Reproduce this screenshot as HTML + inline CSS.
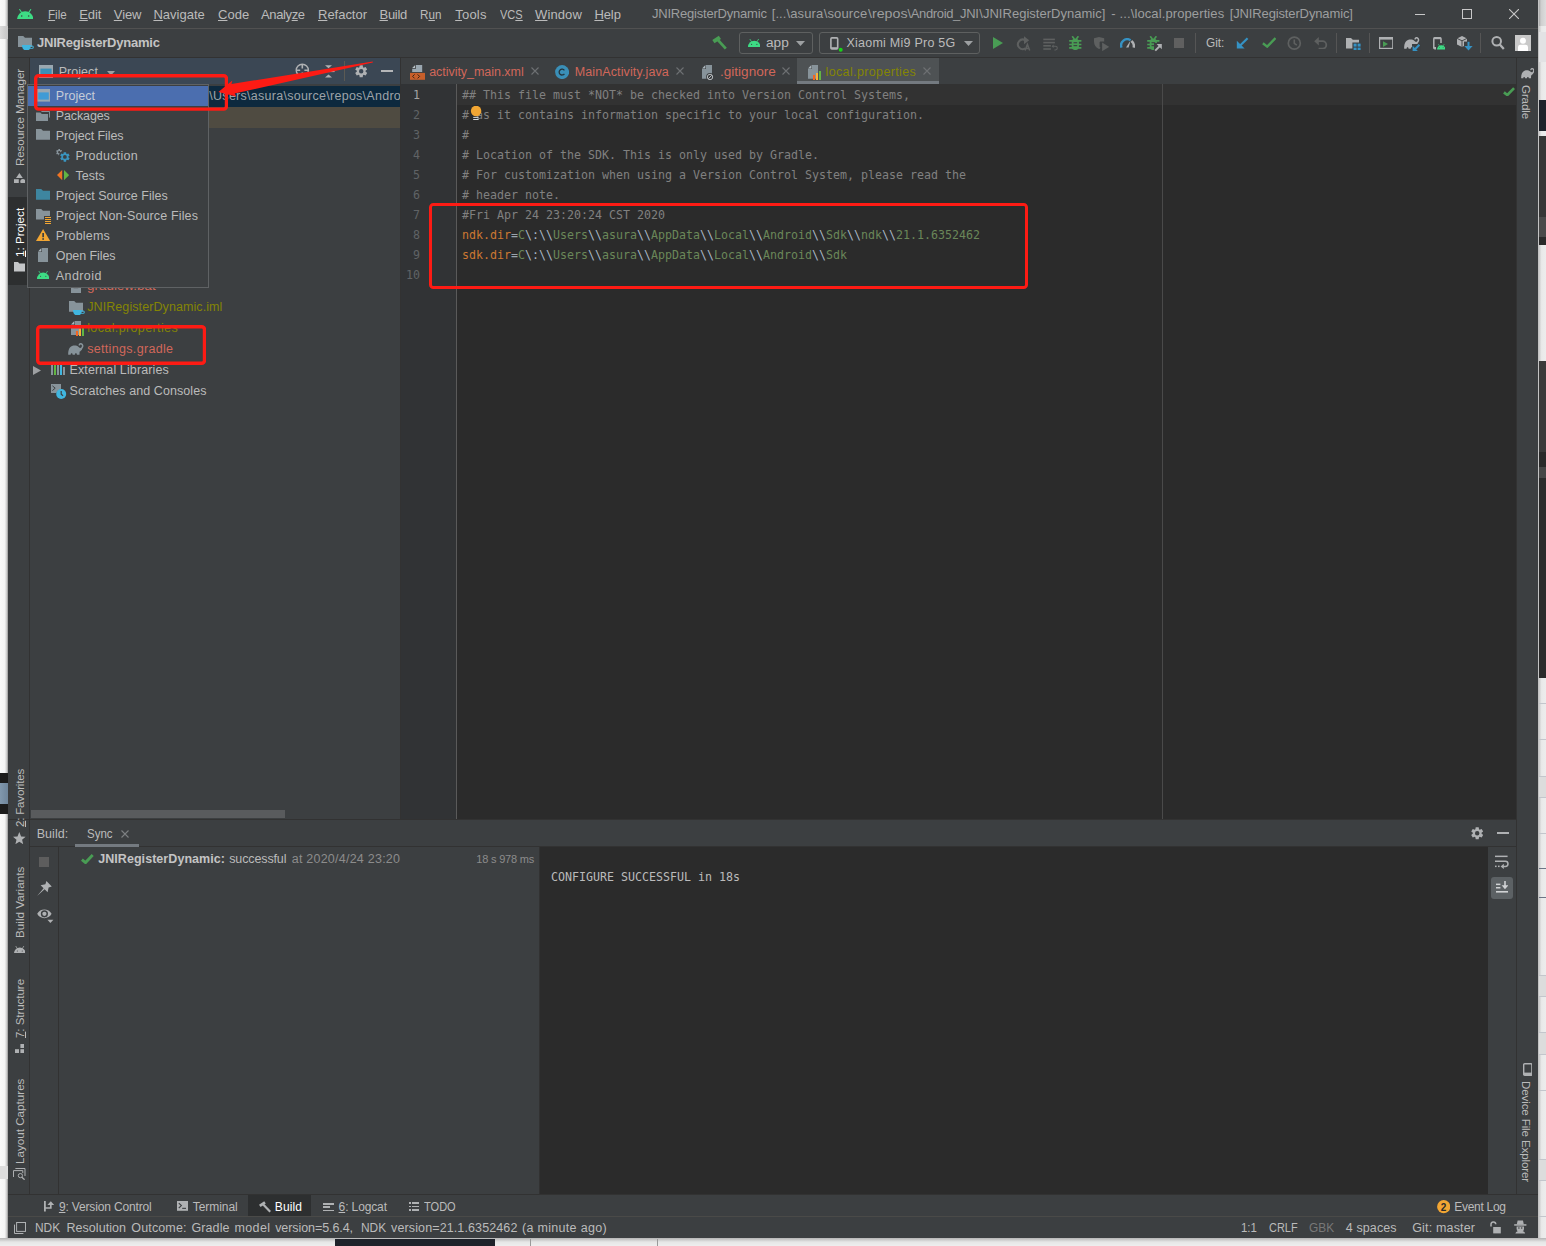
<!DOCTYPE html><html><head><meta charset="utf-8"><title>JNIRegisterDynamic</title><style>
html,body{margin:0;padding:0;}body{width:1546px;height:1246px;position:relative;overflow:hidden;background:#f0f0f0;font-family:'Liberation Sans', sans-serif;}
#w div,#w svg,#w span.t{position:absolute;}
span.t{white-space:pre;line-height:1;display:block;}
span.m{font-family:'DejaVu Sans Mono', 'Liberation Mono', monospace;}
u{text-decoration:underline;text-underline-offset:0.5px;text-decoration-thickness:1px;}
</style></head><body><div id="w">
<div style="left:0px;top:0px;width:1546px;height:1246px;background:#efefef;"></div>
<div style="left:0px;top:0px;width:8px;height:1246px;background:linear-gradient(90deg,#fafafa 0%,#f5f5f5 60%,#c4c4c4 88%,#8c8c8c 100%);"></div>
<div style="left:0px;top:26px;width:8px;height:13px;background:linear-gradient(90deg,#dcdcdc,#c4c4c4);"></div>
<div style="left:0px;top:773px;width:8px;height:41px;background:#1c1c1c;"></div>
<div style="left:0px;top:783px;width:8px;height:21px;background:linear-gradient(90deg,#8198ad,#6f859a);"></div>
<div style="left:0px;top:1166px;width:8px;height:13px;background:#dddddd;"></div>
<div style="left:1538px;top:0px;width:8px;height:1246px;background:linear-gradient(90deg,#bdbdbd 0%,#e9e9e9 45%,#ededed 100%);"></div>
<div style="left:1539px;top:100px;width:7px;height:31px;background:#1e222a;"></div>
<div style="left:1539px;top:0px;width:7px;height:26px;background:linear-gradient(90deg,#a9a9a9 0%,#cfcfcf 30%,#dddddd 100%);"></div>
<div style="left:1539px;top:32px;width:7px;height:30px;background:#e2e2e4;"></div>
<div style="left:1539px;top:136px;width:7px;height:81px;background:#363636;"></div>
<div style="left:1539px;top:217px;width:7px;height:20px;background:#4a4a4a;"></div>
<div style="left:1539px;top:237px;width:7px;height:8px;background:#2a2a2a;"></div>
<div style="left:1539px;top:361px;width:7px;height:91px;background:#3a3a3a;"></div>
<div style="left:1539px;top:452px;width:7px;height:15px;background:#2a2a2a;"></div>
<div style="left:1539px;top:467px;width:7px;height:11px;background:#464646;"></div>
<div style="left:1539px;top:478px;width:7px;height:200px;background:#2b2b2b;"></div>
<div style="left:1539px;top:703px;width:7px;height:1px;background:#c3c6cc;"></div>
<div style="left:1539px;top:739px;width:7px;height:1px;background:#c3c6cc;"></div>
<div style="left:1539px;top:776px;width:7px;height:1px;background:#c3c6cc;"></div>
<div style="left:1539px;top:797px;width:7px;height:1px;background:#c3c6cc;"></div>
<div style="left:1539px;top:833px;width:7px;height:1px;background:#c3c6cc;"></div>
<div style="left:1539px;top:975px;width:7px;height:1px;background:#c3c6cc;"></div>
<div style="left:1539px;top:996px;width:7px;height:1px;background:#c3c6cc;"></div>
<div style="left:1539px;top:1032px;width:7px;height:1px;background:#c3c6cc;"></div>
<div style="left:1539px;top:1054px;width:7px;height:1px;background:#c3c6cc;"></div>
<div style="left:1539px;top:1090px;width:7px;height:1px;background:#c3c6cc;"></div>
<div style="left:1539px;top:1159px;width:7px;height:1px;background:#c3c6cc;"></div>
<div style="left:1539px;top:1180px;width:7px;height:1px;background:#c3c6cc;"></div>
<div style="left:1539px;top:1216px;width:7px;height:1px;background:#c3c6cc;"></div>
<div style="left:1539px;top:868px;width:7px;height:1px;background:#6d7586;"></div>
<div style="left:1539px;top:897px;width:7px;height:1px;background:#6d7586;"></div>
<div style="left:1539px;top:777px;width:7px;height:20px;background:#dcdcdc;"></div>
<div style="left:1539px;top:976px;width:7px;height:20px;background:#dcdcdc;"></div>
<div style="left:1539px;top:1033px;width:7px;height:21px;background:#dcdcdc;"></div>
<div style="left:1539px;top:1160px;width:7px;height:20px;background:#dcdcdc;"></div>
<div style="left:0px;top:1238px;width:1546px;height:8px;background:linear-gradient(180deg,#b5b5b5 0%,#e6e6e6 50%,#eeeeee 100%);"></div>
<div style="left:335px;top:1239px;width:160px;height:7px;background:#1e222a;"></div>
<div style="left:530px;top:1239px;width:1px;height:7px;background:#9a9a9a;"></div>
<div style="left:657px;top:1239px;width:1px;height:7px;background:#9a9a9a;"></div>
<div style="left:8px;top:0px;width:1530px;height:1238px;background:#3c3f41;"></div>
<div style="left:8px;top:28px;width:1530px;height:1px;background:#515151;"></div>
<div style="left:8px;top:57px;width:1530px;height:1px;background:#323232;"></div>
<div style="left:29px;top:58px;width:1px;height:1136px;background:#323232;"></div>
<div style="left:8px;top:197px;width:21px;height:88px;background:#2d2f30;"></div>
<div style="left:30px;top:58px;width:370px;height:26px;background:#3b4754;"></div>
<div style="left:30px;top:86px;width:370px;height:21px;background:#0d293e;"></div>
<div style="left:30px;top:107px;width:370px;height:21px;background:#4f4b41;"></div>
<div style="left:400px;top:58px;width:1px;height:762px;background:#323232;"></div>
<div style="left:31px;top:810px;width:254px;height:8px;background:#595b5d;"></div>
<div style="left:401px;top:58px;width:1115px;height:26px;background:#3c3f41;"></div>
<div style="left:797px;top:58px;width:142px;height:26px;background:#4e5254;"></div>
<div style="left:797px;top:81px;width:142px;height:3px;background:#747a80;"></div>
<div style="left:401px;top:84px;width:1115px;height:735px;background:#2b2b2b;"></div>
<div style="left:401px;top:84px;width:55px;height:735px;background:#313335;"></div>
<div style="left:456px;top:84px;width:1px;height:735px;background:#5a5a5a;"></div>
<div style="left:457px;top:84px;width:1059px;height:21px;background:#323232;"></div>
<div style="left:1162px;top:84px;width:1px;height:735px;background:#4a4a4a;"></div>
<div style="left:1516px;top:58px;width:1px;height:1136px;background:#323232;"></div>
<div style="left:8px;top:819px;width:1509px;height:1px;background:#323232;"></div>
<div style="left:30px;top:820px;width:1486px;height:26px;background:#3c3f41;"></div>
<div style="left:30px;top:846px;width:1486px;height:1px;background:#323232;"></div>
<div style="left:75px;top:844px;width:64px;height:3px;background:#747a80;"></div>
<div style="left:58px;top:847px;width:1px;height:347px;background:#323232;"></div>
<div style="left:540px;top:847px;width:948px;height:347px;background:#2b2b2b;"></div>
<div style="left:539px;top:847px;width:1px;height:347px;background:#323232;"></div>
<div style="left:1491px;top:877px;width:22px;height:22px;background:#5c6164;border-radius:3px;"></div>
<div style="left:8px;top:1194px;width:1530px;height:1px;background:#323232;"></div>
<div style="left:248px;top:1195px;width:63px;height:22px;background:#2d2f30;"></div>
<div style="left:8px;top:1216px;width:1530px;height:1px;background:#4a4a48;"></div>
<span class="t" id="t0" style="font-size:13px;color:#bbbbbb;transform-origin:0 0;transform:scaleX(0.8918);left:48.2px;top:8.00px;"><u>F</u>ile</span>
<span class="t" id="t1" style="font-size:13px;color:#bbbbbb;letter-spacing:-0.069px;left:79.2px;top:8.00px;"><u>E</u>dit</span>
<span class="t" id="t2" style="font-size:13px;color:#bbbbbb;letter-spacing:-0.084px;left:113.8px;top:8.00px;"><u>V</u>iew</span>
<span class="t" id="t3" style="font-size:13px;color:#bbbbbb;letter-spacing:0.013px;left:153.4px;top:8.00px;"><u>N</u>avigate</span>
<span class="t" id="t4" style="font-size:13px;color:#bbbbbb;letter-spacing:0.069px;left:218px;top:8.00px;"><u>C</u>ode</span>
<span class="t" id="t5" style="font-size:13px;color:#bbbbbb;letter-spacing:-0.378px;left:261px;top:8.00px;">Analy<u>z</u>e</span>
<span class="t" id="t6" style="font-size:13px;color:#bbbbbb;letter-spacing:-0.020px;left:318px;top:8.00px;"><u>R</u>efactor</span>
<span class="t" id="t7" style="font-size:13px;color:#bbbbbb;letter-spacing:-0.305px;left:379.5px;top:8.00px;"><u>B</u>uild</span>
<span class="t" id="t8" style="font-size:13px;color:#bbbbbb;transform-origin:0 0;transform:scaleX(0.8969);left:420.4px;top:8.00px;">R<u>u</u>n</span>
<span class="t" id="t9" style="font-size:13px;color:#bbbbbb;letter-spacing:0.235px;left:455.2px;top:8.00px;"><u>T</u>ools</span>
<span class="t" id="t10" style="font-size:13px;color:#bbbbbb;transform-origin:0 0;transform:scaleX(0.8491);left:500.3px;top:8.00px;">VC<u>S</u></span>
<span class="t" id="t11" style="font-size:13px;color:#bbbbbb;letter-spacing:0.090px;left:535.1px;top:8.00px;"><u>W</u>indow</span>
<span class="t" id="t12" style="font-size:13px;color:#bbbbbb;letter-spacing:-0.083px;left:594.4px;top:8.00px;"><u>H</u>elp</span>
<span class="t" id="t13" style="font-size:13px;color:#9c9e9f;letter-spacing:-0.211px;left:652px;top:7.30px;">JNIRegisterDynamic</span>
<span class="t" id="t14" style="font-size:13px;color:#9c9e9f;letter-spacing:0.102px;left:771.7px;top:7.30px;">[...\asura</span>
<span class="t" id="t15" style="font-size:13px;color:#9c9e9f;letter-spacing:0.143px;left:823.7px;top:7.30px;">\source</span>
<span class="t" id="t16" style="font-size:13px;color:#9c9e9f;transform-origin:0 0;transform:scaleX(1.0930);left:867.5px;top:7.30px;">\repos</span>
<span class="t" id="t17" style="font-size:13px;color:#9c9e9f;letter-spacing:-0.341px;left:907.4px;top:7.30px;">\Android_JNI</span>
<span class="t" id="t18" style="font-size:13px;color:#9c9e9f;letter-spacing:0.021px;left:979.3px;top:7.30px;">\JNIRegisterDynamic]</span>
<span class="t" id="t19" style="font-size:13px;color:#9c9e9f;left:1111.2px;top:7.30px;">-</span>
<span class="t" id="t20" style="font-size:13px;color:#9c9e9f;letter-spacing:0.110px;left:1119.5px;top:7.30px;">...\local.properties</span>
<span class="t" id="t21" style="font-size:13px;color:#9c9e9f;letter-spacing:-0.132px;left:1229.7px;top:7.30px;">[JNIRegisterDynamic]</span>
<div style="left:1415px;top:14px;width:10px;height:1px;background:#c8c8c8;"></div>
<div style="left:1462px;top:9px;width:10px;height:10px;background:transparent;border:1px solid #c8c8c8;box-sizing:border-box;"></div>
<svg style="left:1509px;top:9px;" width="10" height="10" viewBox="0 0 10 10"><path d="M0,0 L10,10 M10,0 L0,10" stroke="#c8c8c8" stroke-width="1.1" fill="none"/></svg>
<span class="t" id="t22" style="font-size:13px;color:#c4c4c4;font-weight:bold;letter-spacing:-0.203px;left:37px;top:35.80px;">JNIRegisterDynamic</span>
<span class="t" id="t23" style="font-size:12.5px;color:#bbbbbb;transform-origin:0 0;transform:scaleX(1.0930);left:766.3px;top:37.02px;">app</span>
<span class="t" id="t24" style="font-size:12.5px;color:#bbbbbb;letter-spacing:0.250px;left:846.4px;top:36.82px;">Xiaomi Mi9 Pro 5G</span>
<span class="t" id="t25" style="font-size:13px;color:#bbbbbb;transform-origin:0 0;transform:scaleX(0.9093);left:1205.8px;top:36.00px;">Git:</span>
<div style="left:739px;top:32px;width:74px;height:22px;background:transparent;border:1px solid #5e6060;border-radius:3px;box-sizing:border-box;"></div>
<div style="left:819px;top:32px;width:161px;height:22px;background:transparent;border:1px solid #5e6060;border-radius:3px;box-sizing:border-box;"></div>
<svg style="left:796px;top:41px;" width="9" height="5" viewBox="0 0 9 5"><path d="M0,0 H9 L4.5,5 Z" fill="#9da0a2"/></svg>
<svg style="left:963.5px;top:41px;" width="9" height="5" viewBox="0 0 9 5"><path d="M0,0 H9 L4.5,5 Z" fill="#9da0a2"/></svg>
<div style="left:1195px;top:33px;width:1px;height:20px;background:#555555;"></div>
<div style="left:1336px;top:33px;width:1px;height:20px;background:#555555;"></div>
<div style="left:1369px;top:33px;width:1px;height:20px;background:#555555;"></div>
<div style="left:1480px;top:33px;width:1px;height:20px;background:#555555;"></div>
<span class="t" id="t26" style="font-size:12.5px;color:#bbbbbb;letter-spacing:0.049px;left:58.7px;top:65.92px;">Project</span>
<svg style="left:107px;top:70.5px;" width="8" height="5" viewBox="0 0 8 5"><path d="M0,0 H8 L4,4.5 Z" fill="#9da0a2"/></svg>
<div style="left:344px;top:61px;width:1px;height:20px;background:#5b5a54;"></div>
<div style="left:381px;top:70px;width:12px;height:2px;background:#b4b6b8;"></div>
<span class="t" id="t27" style="font-size:12.5px;color:#9da3a8;letter-spacing:0.268px;left:196.3px;top:90.42px;width:203.7px;overflow:hidden;">C:\Users\asura\source\repos\Andro</span>
<span class="t" id="t28" style="font-size:12.5px;color:#d1675a;transform-origin:0 0;transform:scaleX(1.0745);left:87.2px;top:280.32px;">gradlew.bat</span>
<span class="t" id="t29" style="font-size:12.5px;color:#848504;letter-spacing:0.088px;left:87.2px;top:301.32px;">JNIRegisterDynamic.iml</span>
<span class="t" id="t30" style="font-size:12.5px;color:#848504;letter-spacing:0.382px;left:87.2px;top:322.32px;">local.properties</span>
<span class="t" id="t31" style="font-size:12.5px;color:#d1675a;letter-spacing:0.321px;left:87.2px;top:343.32px;">settings.gradle</span>
<span class="t" id="t32" style="font-size:12.5px;color:#bbbbbb;letter-spacing:0.114px;left:69.5px;top:364.32px;">External Libraries</span>
<span class="t" id="t33" style="font-size:12.5px;color:#bbbbbb;letter-spacing:0.067px;left:69.5px;top:385.32px;">Scratches and Consoles</span>
<svg style="left:33px;top:365.5px;" width="8" height="9" viewBox="0 0 8 9"><path d="M0,0 L8,4.5 L0,9 Z" fill="#9da0a2"/></svg>
<svg style="left:71px;top:279px;" width="10" height="14" viewBox="0 0 10 14"><path d="M4,0 H10 V14 H0 V4 H4 Z" fill="#87939a"/><path d="M3.4,0 V3.4 H0 Z" fill="#aab5bc"/><rect x="2.6" y="7.6" width="4.6" height="1.6" fill="#3c3f41"/></svg>
<svg style="left:69px;top:301.2px;" width="14.4" height="10.8" viewBox="0 0 14.4 10.8"><path d="M0,0 H5.2 L7,1.8 H14.4 V10.8 H0 Z" fill="#87939a"/></svg>
<svg style="left:72.8px;top:310px;" width="12" height="5.4" viewBox="0 0 12 5.4"><path d="M0,0 H8.6 V0.6 H10.2 A1.6,1.6 0 0 1 10.2,3.8 H8 C7.4,4.9 6.4,5.4 4.3,5.4 C1.6,5.4 0,3.6 0,0 Z M8.6,1.5 V2.9 H10.1 A0.7,0.7 0 0 0 10.1,1.5 Z" fill="#40b6e0" stroke="#3c3f41" stroke-width="0.0"/></svg>
<svg style="left:71px;top:321px;" width="10" height="14" viewBox="0 0 10 14"><path d="M4,0 H10 V14 H0 V4 H4 Z" fill="#87939a"/><path d="M3.4,0 V3.4 H0 Z" fill="#aab5bc"/></svg>
<div style="left:76px;top:331px;width:2px;height:5px;background:#f26522;"></div>
<div style="left:79px;top:329px;width:2px;height:7px;background:#fbb03b;"></div>
<div style="left:82px;top:327px;width:2px;height:9px;background:#62b543;"></div>
<svg style="left:68.3px;top:342.8px;" width="15.6" height="12.077419354838709" viewBox="0 0 15.5 12"><path d="M0.2,11.8 C0,7.5 1.2,4 4,3 C6.5,2.2 9,2.6 10.6,4 C11.4,4.7 12,5 12.6,4.8 L14,6.4 C13,7.6 12,8.2 11.5,8.8 L11.4,11.8 H8.9 L8.7,10.7 C8.2,10.1 7.4,10.1 7,10.7 L6.8,11.8 H4.6 L4.4,10.7 C3.9,10.1 3.1,10.1 2.8,10.7 L2.6,11.8 Z" fill="#87939a"/><path d="M12.6,6 C14.6,4.8 15.1,2.6 14.1,1.4 C13.2,0.4 11.6,0.7 11.3,1.8" fill="none" stroke="#87939a" stroke-width="1.5" stroke-linecap="round"/></svg>
<div style="left:51px;top:365.3px;width:2.2px;height:9.6px;background:#87939a;"></div>
<div style="left:54px;top:365.3px;width:2.2px;height:9.6px;background:#62b543;"></div>
<div style="left:57px;top:365.3px;width:2.2px;height:9.6px;background:#87939a;"></div>
<div style="left:60px;top:365.3px;width:2.2px;height:9.6px;background:#40b6e0;"></div>
<div style="left:63px;top:367.4px;width:2.2px;height:7.5px;background:#87939a;"></div>
<svg style="left:51px;top:384px;" width="16" height="15.5" viewBox="0 0 16 15.5"><path d="M0,0 H10 V5.4 A5,5 0 0 0 5.4,9 H0 Z" fill="#87939a"/><path d="M1.4,1.8 L4.2,4.2 L1.4,6.6" stroke="#3c3f41" stroke-width="1" fill="none"/><circle cx="10.2" cy="10" r="5" fill="#40b6e0"/><path d="M10.2,7 V10.2 L12,11.8" stroke="#3c3f41" stroke-width="1.2" fill="none"/></svg>
<div style="left:27px;top:84px;width:182px;height:204px;background:#3c3f41;border:1px solid #5f6264;box-sizing:border-box;"></div>
<div style="left:28px;top:86px;width:180px;height:20px;background:#4b6eaf;"></div>
<span class="t" id="t34" style="font-size:12.5px;color:#c6ccd8;letter-spacing:0.049px;left:55.8px;top:90.32px;">Project</span>
<span class="t" id="t35" style="font-size:12.5px;color:#bbbbbb;letter-spacing:-0.129px;left:55.8px;top:110.32px;">Packages</span>
<span class="t" id="t36" style="font-size:12.5px;color:#bbbbbb;letter-spacing:-0.082px;left:55.8px;top:130.32px;">Project Files</span>
<span class="t" id="t37" style="font-size:12.5px;color:#bbbbbb;letter-spacing:0.282px;left:75.5px;top:150.32px;">Production</span>
<span class="t" id="t38" style="font-size:12.5px;color:#bbbbbb;left:75.5px;top:170.32px;">Tests</span>
<span class="t" id="t39" style="font-size:12.5px;color:#bbbbbb;left:55.8px;top:190.32px;">Project Source Files</span>
<span class="t" id="t40" style="font-size:12.5px;color:#bbbbbb;letter-spacing:0.137px;left:55.8px;top:210.32px;">Project Non-Source Files</span>
<span class="t" id="t41" style="font-size:12.5px;color:#bbbbbb;letter-spacing:0.158px;left:55.8px;top:230.32px;">Problems</span>
<span class="t" id="t42" style="font-size:12.5px;color:#bbbbbb;letter-spacing:-0.073px;left:55.8px;top:250.32px;">Open Files</span>
<span class="t" id="t43" style="font-size:12.5px;color:#bbbbbb;letter-spacing:0.418px;left:55.8px;top:270.32px;">Android</span>
<span class="t" id="t44" style="font-size:12.5px;color:#d1675a;letter-spacing:-0.042px;left:429.2px;top:65.62px;">activity_main.xml</span>
<span class="t" id="t45" style="font-size:12.5px;color:#d1675a;letter-spacing:0.121px;left:574.7px;top:65.62px;">MainActivity.java</span>
<span class="t" id="t46" style="font-size:12.5px;color:#d1675a;transform-origin:0 0;transform:scaleX(1.0848);left:719.5px;top:65.62px;">.gitignore</span>
<span class="t" id="t47" style="font-size:12.5px;color:#848504;letter-spacing:0.369px;left:825.5px;top:65.62px;">local.properties</span>
<svg style="left:531px;top:67px;" width="8" height="8" viewBox="0 0 8 8"><path d="M0.5,0.5 L7.5,7.5 M7.5,0.5 L0.5,7.5" stroke="#6e7173" stroke-width="1.1" fill="none"/></svg>
<svg style="left:676px;top:67px;" width="8" height="8" viewBox="0 0 8 8"><path d="M0.5,0.5 L7.5,7.5 M7.5,0.5 L0.5,7.5" stroke="#6e7173" stroke-width="1.1" fill="none"/></svg>
<svg style="left:782px;top:67px;" width="8" height="8" viewBox="0 0 8 8"><path d="M0.5,0.5 L7.5,7.5 M7.5,0.5 L0.5,7.5" stroke="#6e7173" stroke-width="1.1" fill="none"/></svg>
<svg style="left:923.3px;top:67px;" width="8" height="8" viewBox="0 0 8 8"><path d="M0.5,0.5 L7.5,7.5 M7.5,0.5 L0.5,7.5" stroke="#6e7173" stroke-width="1.1" fill="none"/></svg>
<span class="t m" id="t48" style="font-size:11.63px;color:#808080;left:462px;top:89.96px;">## This file must *NOT* be checked into Version Control Systems,</span>
<span class="t m" id="t49" style="font-size:11.63px;color:#808080;left:462px;top:109.96px;"># as it contains information specific to your local configuration.</span>
<span class="t m" id="t50" style="font-size:11.63px;color:#808080;left:462px;top:129.96px;">#</span>
<span class="t m" id="t51" style="font-size:11.63px;color:#808080;left:462px;top:149.96px;"># Location of the SDK. This is only used by Gradle.</span>
<span class="t m" id="t52" style="font-size:11.63px;color:#808080;left:462px;top:169.96px;"># For customization when using a Version Control System, please read the</span>
<span class="t m" id="t53" style="font-size:11.63px;color:#808080;left:462px;top:189.96px;"># header note.</span>
<span class="t m" id="t54" style="font-size:11.63px;color:#808080;left:462px;top:209.96px;">#Fri Apr 24 23:20:24 CST 2020</span>
<span class="t m" id="t55" style="font-size:11.63px;color:#808080;left:462px;top:229.96px;"><span style="color:#cc7832">ndk.dir</span><span style="color:#9aa4ad">=</span><span style="color:#6a8759">C</span><span style="color:#a9b7c6">\:</span><span style="color:#a9b7c6">\\</span><span style="color:#6a8759">Users</span><span style="color:#a9b7c6">\\</span><span style="color:#6a8759">asura</span><span style="color:#a9b7c6">\\</span><span style="color:#6a8759">AppData</span><span style="color:#a9b7c6">\\</span><span style="color:#6a8759">Local</span><span style="color:#a9b7c6">\\</span><span style="color:#6a8759">Android</span><span style="color:#a9b7c6">\\</span><span style="color:#6a8759">Sdk</span><span style="color:#a9b7c6">\\</span><span style="color:#6a8759">ndk</span><span style="color:#a9b7c6">\\</span><span style="color:#6a8759">21.1.6352462</span></span>
<span class="t m" id="t56" style="font-size:11.63px;color:#808080;left:462px;top:249.96px;"><span style="color:#cc7832">sdk.dir</span><span style="color:#9aa4ad">=</span><span style="color:#6a8759">C</span><span style="color:#a9b7c6">\:</span><span style="color:#a9b7c6">\\</span><span style="color:#6a8759">Users</span><span style="color:#a9b7c6">\\</span><span style="color:#6a8759">asura</span><span style="color:#a9b7c6">\\</span><span style="color:#6a8759">AppData</span><span style="color:#a9b7c6">\\</span><span style="color:#6a8759">Local</span><span style="color:#a9b7c6">\\</span><span style="color:#6a8759">Android</span><span style="color:#a9b7c6">\\</span><span style="color:#6a8759">Sdk</span></span>
<span class="t m" id="t57" style="font-size:11.63px;color:#a4a3a3;left:413px;top:89.96px;">1</span>
<span class="t m" id="t58" style="font-size:11.63px;color:#606366;left:413px;top:109.96px;">2</span>
<span class="t m" id="t59" style="font-size:11.63px;color:#606366;left:413px;top:129.96px;">3</span>
<span class="t m" id="t60" style="font-size:11.63px;color:#606366;left:413px;top:149.96px;">4</span>
<span class="t m" id="t61" style="font-size:11.63px;color:#606366;left:413px;top:169.96px;">5</span>
<span class="t m" id="t62" style="font-size:11.63px;color:#606366;left:413px;top:189.96px;">6</span>
<span class="t m" id="t63" style="font-size:11.63px;color:#606366;left:413px;top:209.96px;">7</span>
<span class="t m" id="t64" style="font-size:11.63px;color:#606366;left:413px;top:229.96px;">8</span>
<span class="t m" id="t65" style="font-size:11.63px;color:#606366;left:413px;top:249.96px;">9</span>
<span class="t m" id="t66" style="font-size:11.63px;color:#606366;left:406px;top:269.96px;">10</span>
<svg style="left:469px;top:106px;" width="14" height="15" viewBox="0 0 14 15"><circle cx="7.1" cy="5" r="5.25" fill="#f2a633"/><rect x="4.2" y="10.9" width="5.4" height="1" fill="#d5d7d9"/><rect x="4.2" y="13" width="5.4" height="1" fill="#d5d7d9"/></svg>
<span class="t" id="t67" style="font-size:12.5px;color:#bbbbbb;letter-spacing:0.044px;left:36.7px;top:827.62px;">Build:</span>
<span class="t" id="t68" style="font-size:12.5px;color:#bbbbbb;transform-origin:0 0;transform:scaleX(0.9210);left:87.2px;top:827.62px;">Sync</span>
<svg style="left:120.5px;top:830px;" width="8" height="8" viewBox="0 0 8 8"><path d="M0.5,0.5 L7.5,7.5 M7.5,0.5 L0.5,7.5" stroke="#7d8082" stroke-width="1.1" fill="none"/></svg>
<span class="t" id="t69" style="font-size:12.5px;color:#c4c4c4;font-weight:bold;letter-spacing:0.058px;left:98.2px;top:853.42px;">JNIRegisterDynamic:</span>
<span class="t" id="t70" style="font-size:12.5px;color:#bbbbbb;letter-spacing:-0.118px;left:229.2px;top:853.42px;">successful</span>
<span class="t" id="t71" style="font-size:12.5px;color:#8c8c8c;letter-spacing:0.237px;left:291.7px;top:853.42px;">at 2020/4/24 23:20</span>
<span class="t" id="t72" style="font-size:11px;color:#8c8c8c;letter-spacing:-0.202px;left:476.3px;top:853.69px;">18 s 978 ms</span>
<span class="t m" id="t73" style="font-size:11.63px;color:#bbbbbb;left:551px;top:871.96px;">CONFIGURE SUCCESSFUL in 18s</span>
<div style="left:39px;top:857px;width:10px;height:10px;background:#5d5d5d;"></div>
<span class="t" id="t74" style="font-size:12px;color:#bbbbbb;letter-spacing:-0.153px;left:58.9px;top:1201.34px;"><u>9</u>: Version Control</span>
<span class="t" id="t75" style="font-size:12px;color:#bbbbbb;letter-spacing:-0.066px;left:192.8px;top:1201.34px;">Terminal</span>
<span class="t" id="t76" style="font-size:12px;color:#ffffff;letter-spacing:0.128px;left:274.8px;top:1201.34px;">Build</span>
<span class="t" id="t77" style="font-size:12px;color:#bbbbbb;letter-spacing:-0.124px;left:338.6px;top:1201.34px;"><u>6</u>: Logcat</span>
<span class="t" id="t78" style="font-size:12px;color:#bbbbbb;transform-origin:0 0;transform:scaleX(0.9201);left:424.2px;top:1201.34px;">TODO</span>
<span class="t" id="t79" style="font-size:12px;color:#bbbbbb;letter-spacing:-0.293px;left:1454.3px;top:1201.34px;">Event Log</span>
<span class="t" id="t80" style="font-size:12.5px;color:#bbbbbb;transform-origin:0 0;transform:scaleX(0.9543);left:35.3px;top:1221.62px;">NDK</span>
<span class="t" id="t81" style="font-size:12.5px;color:#bbbbbb;letter-spacing:0.047px;left:66.5px;top:1221.62px;">Resolution</span>
<span class="t" id="t82" style="font-size:12.5px;color:#bbbbbb;letter-spacing:0.145px;left:131.3px;top:1221.62px;">Outcome:</span>
<span class="t" id="t83" style="font-size:12.5px;color:#bbbbbb;letter-spacing:0.094px;left:191.5px;top:1221.62px;">Gradle</span>
<span class="t" id="t84" style="font-size:12.5px;color:#bbbbbb;letter-spacing:0.363px;left:234.5px;top:1221.62px;">model</span>
<span class="t" id="t85" style="font-size:12.5px;color:#bbbbbb;letter-spacing:-0.075px;left:275.2px;top:1221.62px;">version=5.6.4,</span>
<span class="t" id="t86" style="font-size:12.5px;color:#bbbbbb;transform-origin:0 0;transform:scaleX(0.9543);left:360.8px;top:1221.62px;">NDK</span>
<span class="t" id="t87" style="font-size:12.5px;color:#bbbbbb;letter-spacing:0.118px;left:391.1px;top:1221.62px;">version=21.1.6352462</span>
<span class="t" id="t88" style="font-size:12.5px;color:#bbbbbb;letter-spacing:0.307px;left:522px;top:1221.62px;">(a minute ago)</span>
<span class="t" id="t89" style="font-size:12.5px;color:#bbbbbb;transform-origin:0 0;transform:scaleX(0.9143);left:1240.5px;top:1221.62px;">1:1</span>
<span class="t" id="t90" style="font-size:12.5px;color:#bbbbbb;transform-origin:0 0;transform:scaleX(0.8758);left:1269px;top:1221.62px;">CRLF</span>
<span class="t" id="t91" style="font-size:12.5px;color:#787878;transform-origin:0 0;transform:scaleX(0.9505);left:1309.2px;top:1221.62px;">GBK</span>
<span class="t" id="t92" style="font-size:12.5px;color:#bbbbbb;letter-spacing:0.110px;left:1345.8px;top:1221.62px;">4 spaces</span>
<span class="t" id="t93" style="font-size:12.5px;color:#bbbbbb;letter-spacing:0.167px;left:1412.2px;top:1221.62px;">Git: master</span>
<span class="t" id="t94" style="font-size:11.6px;color:#bbbbbb;letter-spacing:-0.101px;left:13.60px;top:166.2px;transform-origin:0 0;transform:rotate(-90deg);">Resource Manager</span>
<span class="t" id="t95" style="font-size:11.6px;color:#ffffff;letter-spacing:0.013px;left:13.60px;top:257.3px;transform-origin:0 0;transform:rotate(-90deg);"><u>1</u>: Project</span>
<span class="t" id="t96" style="font-size:11.6px;color:#bbbbbb;letter-spacing:-0.216px;left:13.60px;top:827.3px;transform-origin:0 0;transform:rotate(-90deg);"><u>2</u>: Favorites</span>
<span class="t" id="t97" style="font-size:11.6px;color:#bbbbbb;letter-spacing:0.041px;left:13.60px;top:938px;transform-origin:0 0;transform:rotate(-90deg);">Build Variants</span>
<span class="t" id="t98" style="font-size:11.6px;color:#bbbbbb;letter-spacing:-0.076px;left:13.60px;top:1037.5px;transform-origin:0 0;transform:rotate(-90deg);"><u>7</u>: Structure</span>
<span class="t" id="t99" style="font-size:11.6px;color:#bbbbbb;letter-spacing:0.023px;left:13.60px;top:1163.8px;transform-origin:0 0;transform:rotate(-90deg);">Layout Captures</span>
<span class="t" id="t100" style="font-size:11.6px;color:#bbbbbb;letter-spacing:-0.143px;left:1531.60px;top:85.4px;transform-origin:0 0;transform:rotate(90deg);">Gradle</span>
<span class="t" id="t101" style="font-size:11.6px;color:#bbbbbb;letter-spacing:-0.139px;left:1531.60px;top:1080.5px;transform-origin:0 0;transform:rotate(90deg);">Device File Explorer</span>
<svg style="left:16.8px;top:8.8px;" width="16.4" height="10.66" viewBox="0 0 16 10.4"><path d="M0,10.4 A8,8.3 0 0 1 16,10.4 Z" fill="#3ddc84"/><path d="M2.6,0.4 L4.8,4 M13.4,0.4 L11.2,4" stroke="#3ddc84" stroke-width="1" stroke-linecap="round"/><circle cx="4.6" cy="6.8" r="0.75" fill="#3c3f41"/><circle cx="11.4" cy="6.8" r="0.75" fill="#3c3f41"/></svg>
<svg style="left:18px;top:36px;" width="14" height="11" viewBox="0 0 14 11"><path d="M0,0 H5.2 L7,1.8 H14 V11 H0 Z" fill="#87939a"/></svg>
<svg style="left:22px;top:45px;" width="12" height="5.4" viewBox="0 0 12 5.4"><path d="M0,0 H8.6 V0.6 H10.2 A1.6,1.6 0 0 1 10.2,3.8 H8 C7.4,4.9 6.4,5.4 4.3,5.4 C1.6,5.4 0,3.6 0,0 Z M8.6,1.5 V2.9 H10.1 A0.7,0.7 0 0 0 10.1,1.5 Z" fill="#40b6e0" stroke="#3c3f41" stroke-width="0.0"/></svg>
<svg style="left:711px;top:35px;" width="17" height="16" viewBox="0 0 17 16"><path d="M2.4,6.6 L8.9,2.3" stroke="#499c54" stroke-width="4"/><path d="M6.6,4.6 L14.8,13.6" stroke="#499c54" stroke-width="2.8"/></svg>
<svg style="left:747.8px;top:38.9px;" width="12.5" height="8.125" viewBox="0 0 16 10.4"><path d="M0,10.4 A8,8.3 0 0 1 16,10.4 Z" fill="#3ddc84"/><path d="M2.6,0.4 L4.8,4 M13.4,0.4 L11.2,4" stroke="#3ddc84" stroke-width="1" stroke-linecap="round"/><circle cx="4.6" cy="6.8" r="0.75" fill="#3c3f41"/><circle cx="11.4" cy="6.8" r="0.75" fill="#3c3f41"/></svg>
<svg style="left:829.5px;top:36.5px;" width="13" height="15" viewBox="0 0 13 15"><rect x="0.9" y="0.9" width="6.8" height="11" rx="1" fill="none" stroke="#afb1b3" stroke-width="1.6"/><rect x="0.9" y="10.2" width="6.8" height="1.7" fill="#afb1b3"/><circle cx="10.7" cy="12.7" r="2" fill="#19d219"/></svg>
<svg style="left:992.8px;top:37px;" width="10" height="12" viewBox="0 0 10 12"><path d="M0,0 L10,6 L0,12 Z" fill="#499c54"/></svg>
<svg style="left:1015.5px;top:35.5px;" width="15" height="15" viewBox="0 0 15 15"><path d="M9.5,12.3 A4.8,4.8 0 1 1 9.2,4.2" fill="none" stroke="#5e6060" stroke-width="2"/><path d="M8,0.2 L13.2,4.2 L8,8.2 Z" fill="#5e6060"/><path d="M9.1,14.6 L11.4,8.4 L13.7,14.6 M10,12.6 H12.8" fill="none" stroke="#5e6060" stroke-width="1.5"/></svg>
<svg style="left:1042.5px;top:37.5px;" width="15" height="13" viewBox="0 0 15 13"><rect x="0.3" y="0.6" width="11.6" height="1.6" fill="#5e6060"/><rect x="0.3" y="3.8" width="11.6" height="1.6" fill="#5e6060"/><rect x="0.3" y="7" width="7.6" height="1.6" fill="#5e6060"/><rect x="0.3" y="10.2" width="7.6" height="1.6" fill="#5e6060"/><path d="M9.6,8.2 H12.4 A1.9,1.9 0 0 1 12.4,12 H11.4" fill="none" stroke="#5e6060" stroke-width="1.1"/><path d="M10.6,6.5 L8.6,8.2 L10.6,9.9 Z" fill="#5e6060"/></svg>
<svg style="left:1068.8px;top:36px;" width="13" height="14.2" viewBox="0 0 13 14.2"><path d="M3.2,0.3 L5.3,3 M9.4,0.3 L7.3,3 M0.2,4.9 H12.4 M0.2,8.5 H12.4 M0.2,11.9 H12.4" stroke="#499c54" stroke-width="1.7" fill="none"/><path d="M2.7,6 A3.6,3.6 0 0 1 9.9,6 V10.5 A3.6,3.6 0 0 1 2.7,10.5 Z" fill="#499c54"/><rect x="4.5" y="6.2" width="3.7" height="1.1" fill="#3c3f41"/><rect x="4.5" y="9.1" width="3.7" height="1.1" fill="#3c3f41"/></svg>
<svg style="left:1093.8px;top:36.8px;" width="15.4" height="14.4" viewBox="0 0 15.4 14.4"><path d="M0,1.3 L5,0 L10.2,1.3 V4.4 H6.2 L5.6,5.2 V10 L6.4,10.4 V10.9 C6,11.4 5.4,11.8 5,12 C1.8,10.6 0,7.8 0,4.4 Z" fill="#5e6060"/><path d="M8.1,5.4 L15.2,9.8 L8.1,14.2 Z" fill="#5e6060"/></svg>
<svg style="left:1119.6px;top:37.6px;" width="15" height="10" viewBox="0 0 15 10"><path d="M1.5,9.6 A6.2,6.2 0 0 1 10.6,2.2" fill="none" stroke="#3592c4" stroke-width="2.4"/><path d="M11.4,3 A6.2,6.2 0 0 1 13.6,9.6" fill="none" stroke="#afb1b3" stroke-width="2.4"/><path d="M6,9.6 L10.6,2.6 L8.6,9.6 Z" fill="#afb1b3"/></svg>
<svg style="left:1146.6px;top:36px;" width="13" height="14.2" viewBox="0 0 13 14.2"><path d="M3.2,0.3 L5.3,3 M9.4,0.3 L7.3,3 M0.2,4.9 H12.4 M0.2,8.5 H12.4 M0.2,11.9 H12.4" stroke="#499c54" stroke-width="1.7" fill="none"/><path d="M2.7,6 A3.6,3.6 0 0 1 9.9,6 V10.5 A3.6,3.6 0 0 1 2.7,10.5 Z" fill="#499c54"/><rect x="4.5" y="6.2" width="3.7" height="1.1" fill="#3c3f41"/><rect x="4.5" y="9.1" width="3.7" height="1.1" fill="#3c3f41"/></svg>
<svg style="left:1154px;top:43px;" width="8.5" height="8.5" viewBox="0 0 8.5 8.5"><rect x="0" y="0" width="8.5" height="8.5" fill="#3c3f41"/><path d="M1.2,7.6 L6.2,2.6" stroke="#afb1b3" stroke-width="2"/><path d="M2.6,1 H7.8 V6.2 Z" fill="#afb1b3"/></svg>
<div style="left:1174px;top:38px;width:10px;height:10px;background:#606060;"></div>
<svg style="left:1235.6px;top:36.8px;" width="13" height="12.4" viewBox="0 0 13 12.4"><path d="M11.6,1.2 L3.4,9.2" stroke="#3592c4" stroke-width="2.2"/><path d="M0.8,3.8 V11.6 H8.6 Z" fill="#3592c4"/></svg>
<svg style="left:1261.5px;top:37.3px;" width="14.4" height="10.8" viewBox="0 0 14.4 10.8"><path d="M0.9,6.26 L5.18,9.60 L13.50,1.1" fill="none" stroke="#499c54" stroke-width="2.4"/></svg>
<svg style="left:1286.6px;top:35.8px;" width="15" height="15" viewBox="0 0 15 15"><circle cx="7.3" cy="7.2" r="6" fill="none" stroke="#5e6060" stroke-width="1.7"/><path d="M7.3,3.6 V7.4 L9.8,9.2" fill="none" stroke="#5e6060" stroke-width="1.6"/></svg>
<svg style="left:1313.6px;top:36.6px;" width="14" height="12.6" viewBox="0 0 14 12.6"><path d="M3,4.2 H8.6 A3.7,3.7 0 0 1 8.6,11.6 H4.6" fill="none" stroke="#5e6060" stroke-width="1.8"/><path d="M4.8,0 L0.2,4.2 L4.8,8.4 Z" fill="#5e6060"/></svg>
<svg style="left:1345.6px;top:37.6px;" width="15" height="12.8" viewBox="0 0 15 12.8"><path d="M0,0 H5 L6.8,1.8 H13 V4.4 H6.4 V10.6 H0 Z" fill="#afb1b3"/><rect x="7.6" y="5.6" width="3" height="3" fill="#3592c4"/><rect x="11.6" y="5.6" width="3" height="3" fill="#3592c4"/><rect x="7.6" y="9.6" width="3" height="3" fill="#3592c4"/><rect x="11.6" y="9.6" width="3" height="3" fill="#3592c4"/></svg>
<svg style="left:1379px;top:37px;" width="14.4" height="12" viewBox="0 0 14.4 12"><rect x="0.6" y="0.6" width="13.2" height="10.8" fill="none" stroke="#afb1b3" stroke-width="1.2"/><rect x="0" y="0" width="14.4" height="2.6" fill="#afb1b3"/><path d="M4,4.2 L9,7.1 L4,10 Z" fill="#499c54"/></svg>
<svg style="left:1404.2px;top:37.3px;" width="15.4" height="11.922580645161291" viewBox="0 0 15.5 12"><path d="M0.2,11.8 C0,7.5 1.2,4 4,3 C6.5,2.2 9,2.6 10.6,4 C11.4,4.7 12,5 12.6,4.8 L14,6.4 C13,7.6 12,8.2 11.5,8.8 L11.4,11.8 H8.9 L8.7,10.7 C8.2,10.1 7.4,10.1 7,10.7 L6.8,11.8 H4.6 L4.4,10.7 C3.9,10.1 3.1,10.1 2.8,10.7 L2.6,11.8 Z" fill="#afb1b3"/><path d="M12.6,6 C14.6,4.8 15.1,2.6 14.1,1.4 C13.2,0.4 11.6,0.7 11.3,1.8" fill="none" stroke="#afb1b3" stroke-width="1.5" stroke-linecap="round"/></svg>
<svg style="left:1412.4px;top:43.6px;" width="8.4" height="7.6" viewBox="0 0 8.4 7.6"><rect width="8.4" height="7.6" fill="#3c3f41"/><path d="M7.4,0.8 L3,5.2" stroke="#3592c4" stroke-width="2"/><path d="M0.6,1.8 V7.2 H6 Z" fill="#3592c4"/></svg>
<svg style="left:1432.6px;top:36.8px;" width="10" height="13" viewBox="0 0 10 13"><rect x="0.8" y="0.8" width="7.2" height="11" rx="1" fill="none" stroke="#afb1b3" stroke-width="1.5"/><rect x="0.8" y="0.4" width="7.2" height="1.8" fill="#afb1b3"/><rect x="0.8" y="10" width="7.2" height="1.8" fill="#afb1b3"/></svg>
<div style="left:1436px;top:43.4px;width:10px;height:7px;background:#3c3f41;"></div>
<svg style="left:1436.8px;top:44px;" width="8.6" height="5.59" viewBox="0 0 16 10.4"><path d="M0,10.4 A8,8.3 0 0 1 16,10.4 Z" fill="#3ddc84"/><path d="M2.6,0.4 L4.8,4 M13.4,0.4 L11.2,4" stroke="#3ddc84" stroke-width="1" stroke-linecap="round"/><circle cx="4.6" cy="6.8" r="0.75" fill="#3c3f41"/><circle cx="11.4" cy="6.8" r="0.75" fill="#3c3f41"/></svg>
<svg style="left:1456.6px;top:35.8px;" width="11" height="12" viewBox="0 0 11 12"><path d="M5,0 L10,2.4 V8.4 L5,11 L0,8.4 V2.4 Z" fill="#afb1b3"/><path d="M0,2.4 L5,4.8 L10,2.4 M5,4.8 V11" fill="none" stroke="#3c3f41" stroke-width="0.9"/></svg>
<svg style="left:1463.6px;top:41.4px;" width="9" height="10" viewBox="0 0 9 10"><rect x="0" y="0.6" width="9" height="9.4" fill="#3c3f41"/><path d="M4.5,0.8 V6" stroke="#3592c4" stroke-width="2"/><path d="M0.4,5 H8.6 L4.5,9.6 Z" fill="#3592c4"/></svg>
<svg style="left:1489.6px;top:35.2px;" width="15.5" height="15.5" viewBox="0 0 15.5 15.5"><circle cx="6.7" cy="6.2" r="4.3" fill="none" stroke="#afb1b3" stroke-width="2"/><path d="M9.8,9.6 L13.8,14" stroke="#afb1b3" stroke-width="2.3"/></svg>
<svg style="left:1515px;top:35px;" width="16" height="16" viewBox="0 0 16 16"><rect width="16" height="16" fill="#c9c9c9"/><circle cx="8" cy="5.8" r="3" fill="#fff"/><path d="M3,16 V12 A2.4,2.4 0 0 1 5.4,9.8 H10.6 A2.4,2.4 0 0 1 13,12 V16 Z" fill="#fff"/></svg>
<svg style="left:39px;top:64.6px;" width="14" height="13.5" viewBox="0 0 14 13.5"><rect x="0" y="0" width="14" height="13.4" fill="#9aa7b0"/><rect x="1.4" y="3.6" width="11.2" height="8.4" fill="#3a8fb7"/></svg>
<svg style="left:294.6px;top:63.4px;" width="15" height="15" viewBox="0 0 15 15"><circle cx="7.3" cy="7.3" r="6.1" fill="none" stroke="#afb1b3" stroke-width="1.4"/><path d="M7.3,1.4 V5.6 M1.4,7.3 H5.2 M9.4,7.3 H13.2 M7.3,9.4 V13.2" stroke="#afb1b3" stroke-width="1.6"/></svg>
<svg style="left:321.6px;top:64.6px;" width="13" height="13" viewBox="0 0 13 13"><path d="M3,0.2 H10 L6.5,3.2 Z M3,12.6 H10 L6.5,9.4 Z" fill="#afb1b3"/><rect x="0.4" y="5.9" width="12.2" height="1.2" fill="#afb1b3"/></svg>
<svg style="left:353.8px;top:64.0px;" width="14.4" height="14.4" viewBox="0 0 14.4 14.4"><path d="M5.38,3.26 L5.70,1.18 L8.70,1.18 L9.02,3.26 L9.70,3.66 L11.66,2.89 L13.16,5.49 L11.52,6.80 L11.52,7.60 L13.16,8.91 L11.66,11.51 L9.70,10.74 L9.02,11.14 L8.70,13.22 L5.70,13.22 L5.38,11.14 L4.70,10.74 L2.74,11.51 L1.24,8.91 L2.88,7.60 L2.88,6.80 L1.24,5.49 L2.74,2.89 L4.70,3.66 Z M9.43,7.20 A2.23,2.23 0 1 0 4.97,7.20 A2.23,2.23 0 1 0 9.43,7.20 Z" fill="#afb1b3" fill-rule="evenodd"/></svg>
<svg style="left:409.8px;top:65px;" width="15.4" height="15" viewBox="0 0 15.4 15"><path d="M6,0 H12.2 V7 H2.2 V3.8 H6 Z" fill="#9aa7b0"/><path d="M5.2,0 V3 H2.2 Z" fill="#b7c0c6"/><rect x="0" y="7.9" width="15.2" height="6.9" fill="#c75f2a"/><path d="M4.6,9.4 L2.6,11.4 L4.6,13.4 M7.6,9.4 L9.6,11.4 L7.6,13.4" stroke="#3a2415" stroke-width="1" fill="none"/></svg>
<svg style="left:554.8px;top:65px;" width="14.2" height="14.2" viewBox="0 0 14.2 14.2"><circle cx="7.1" cy="7.1" r="7" fill="#3a8fb7"/><path d="M9.4,5.4 A2.9,2.9 0 1 0 9.4,8.8" fill="none" stroke="#24323a" stroke-width="1.3"/></svg>
<svg style="left:702px;top:65px;" width="10" height="13.8" viewBox="0 0 10 13.8"><path d="M4,0 H10 V13.8 H0 V4 H4 Z" fill="#87939a"/><path d="M3.4,0 V3.4 H0 Z" fill="#aab5bc"/></svg>
<svg style="left:706.4px;top:72.6px;" width="8" height="8" viewBox="0 0 8 8"><circle cx="4" cy="4" r="3.9" fill="#3c3f41"/><circle cx="4" cy="4" r="2.7" fill="none" stroke="#b4b8bb" stroke-width="1"/><path d="M2.2,5.8 L5.8,2.2" stroke="#b4b8bb" stroke-width="1"/></svg>
<svg style="left:808px;top:65px;" width="10" height="13.8" viewBox="0 0 10 13.8"><path d="M4,0 H10 V13.8 H0 V4 H4 Z" fill="#87939a"/><path d="M3.4,0 V3.4 H0 Z" fill="#aab5bc"/></svg>
<div style="left:813px;top:75px;width:2px;height:5px;background:#f26522;"></div>
<div style="left:816px;top:73px;width:2px;height:7px;background:#fbb03b;"></div>
<div style="left:819px;top:71px;width:2px;height:9px;background:#62b543;"></div>
<svg style="left:1503px;top:87px;" width="12" height="9.2" viewBox="0 0 12 9.2"><path d="M0.9,5.34 L4.32,8.00 L11.10,1.1" fill="none" stroke="#499c54" stroke-width="2.7"/></svg>
<svg style="left:37px;top:89.2px;" width="13" height="12.8" viewBox="0 0 13 12.8"><rect x="0" y="0" width="13" height="12.6" fill="#9aa7b0"/><rect x="1.2" y="3.4" width="10.6" height="7.2" fill="#3f9bd5"/></svg>
<svg style="left:36px;top:111px;" width="14.2" height="10.2" viewBox="0 0 14.2 10.2"><path d="M5.4,0.5 H13.6 V6.6" fill="none" stroke="#87939a" stroke-width="1"/><path d="M0,1.6 H4.4 L5.8,3 H12 V10 H0 Z" fill="#87939a"/></svg>
<svg style="left:36px;top:129.1px;" width="14" height="10.8" viewBox="0 0 14 10.8"><path d="M0,0 H5.2 L7,1.8 H14 V10.8 H0 Z" fill="#87939a"/></svg>
<svg style="left:54.599999999999994px;top:147.60000000000002px;" width="8.4" height="8.4" viewBox="0 0 8.4 8.4"><path d="M3.26,2.17 L3.42,1.10 L4.98,1.10 L5.14,2.17 L5.49,2.37 L6.50,1.98 L7.28,3.32 L6.43,4.00 L6.43,4.40 L7.28,5.08 L6.50,6.42 L5.49,6.03 L5.14,6.23 L4.98,7.30 L3.42,7.30 L3.26,6.23 L2.91,6.03 L1.90,6.42 L1.12,5.08 L1.97,4.40 L1.97,4.00 L1.12,3.32 L1.90,1.98 L2.91,2.37 Z M5.30,4.20 A1.10,1.10 0 1 0 3.10,4.20 A1.10,1.10 0 1 0 5.30,4.20 Z" fill="#87939a" fill-rule="evenodd"/></svg>
<div style="left:59.4px;top:151.4px;width:9px;height:11px;background:#3c3f41;border-radius:5px;"></div>
<svg style="left:59.1px;top:151.1px;" width="11.8" height="11.8" viewBox="0 0 11.8 11.8"><path d="M4.46,2.79 L4.71,1.15 L7.09,1.15 L7.34,2.79 L7.88,3.10 L9.42,2.49 L10.61,4.55 L9.32,5.59 L9.32,6.21 L10.61,7.25 L9.42,9.31 L7.88,8.70 L7.34,9.01 L7.09,10.65 L4.71,10.65 L4.46,9.01 L3.92,8.70 L2.38,9.31 L1.19,7.25 L2.48,6.21 L2.48,5.59 L1.19,4.55 L2.38,2.49 L3.92,3.10 Z M7.80,5.90 A1.90,1.90 0 1 0 4.00,5.90 A1.90,1.90 0 1 0 7.80,5.90 Z" fill="#3a95c0" fill-rule="evenodd"/></svg>
<svg style="left:56.9px;top:169.9px;" width="12.4" height="10.2" viewBox="0 0 12.4 10.2"><path d="M5.2,0 V10.2 L0,5.1 Z" fill="#f07423"/><path d="M7,0 V10.2 L12.2,5.1 Z" fill="#62b543"/></svg>
<svg style="left:36px;top:189px;" width="14" height="10.8" viewBox="0 0 14 10.8"><path d="M0,0 H5.2 L7,1.8 H14 V10.8 H0 Z" fill="#3e86a0"/></svg>
<svg style="left:36px;top:209.2px;" width="14" height="10.6" viewBox="0 0 14 10.6"><path d="M0,0 H5.2 L7,1.8 H14 V10.6 H0 Z" fill="#87939a"/></svg>
<div style="left:44px;top:215.8px;width:8px;height:7.6px;background:#3c3f41;"></div>
<div style="left:45px;top:216.6px;width:6px;height:1px;background:#f2a633;"></div>
<div style="left:45px;top:218.6px;width:6px;height:1px;background:#f2a633;"></div>
<div style="left:45px;top:220.6px;width:6px;height:1px;background:#f2a633;"></div>
<div style="left:45px;top:222.6px;width:6px;height:1px;background:#f2a633;"></div>
<svg style="left:36px;top:229.2px;" width="14.2" height="12" viewBox="0 0 14.2 12"><path d="M7.1,0 L14.2,12 H0 Z" fill="#f2a633"/><rect x="6.3" y="4" width="1.7" height="4.2" fill="#3c3f41"/><rect x="6.3" y="9.2" width="1.7" height="1.6" fill="#3c3f41"/></svg>
<svg style="left:38px;top:248px;" width="10" height="14" viewBox="0 0 10 14"><path d="M4,0 H10 V14 H0 V4 H4 Z" fill="#87939a"/><path d="M3.4,0 V3.4 H0 Z" fill="#aab5bc"/></svg>
<svg style="left:36.8px;top:271.1px;" width="12.4" height="8.06" viewBox="0 0 16 10.4"><path d="M0,10.4 A8,8.3 0 0 1 16,10.4 Z" fill="#3ddc84"/><path d="M2.6,0.4 L4.8,4 M13.4,0.4 L11.2,4" stroke="#3ddc84" stroke-width="1" stroke-linecap="round"/><circle cx="4.6" cy="6.8" r="0.75" fill="#3c3f41"/><circle cx="11.4" cy="6.8" r="0.75" fill="#3c3f41"/></svg>
<svg style="left:13.6px;top:172.6px;" width="11.6" height="10.8" viewBox="0 0 11.6 10.8"><path d="M5.4,0 L8.8,5 H2 Z" fill="#afb1b3"/><rect x="0" y="6.2" width="4.8" height="4.6" fill="#afb1b3"/><circle cx="8.8" cy="8.4" r="2.5" fill="#afb1b3"/></svg>
<svg style="left:14px;top:262.2px;" width="11" height="9.4" viewBox="0 0 11 9.4"><path d="M0,0 H4 L5.4,1.4 H11 V9.4 H0 Z" fill="#c4c6c8"/></svg>
<svg style="left:13.4px;top:832px;" width="12.6" height="12.2" viewBox="0 0 12.6 12.2"><path d="M6.3,0 L8.1,4.4 L12.6,4.7 L9.1,7.7 L10.2,12.2 L6.3,9.7 L2.4,12.2 L3.5,7.7 L0,4.7 L4.5,4.4 Z" fill="#afb1b3"/></svg>
<svg style="left:13.6px;top:945.6px;" width="11.6" height="7.54" viewBox="0 0 16 10.4"><path d="M0,10.4 A8,8.3 0 0 1 16,10.4 Z" fill="#afb1b3"/><path d="M2.6,0.4 L4.8,4 M13.4,0.4 L11.2,4" stroke="#afb1b3" stroke-width="1" stroke-linecap="round"/><circle cx="4.6" cy="6.8" r="0.75" fill="#3c3f41"/><circle cx="11.4" cy="6.8" r="0.75" fill="#3c3f41"/></svg>
<svg style="left:14.8px;top:1043.5px;" width="9.6" height="9.2" viewBox="0 0 9.6 9.2"><rect x="5.4" y="0" width="4" height="4" fill="#afb1b3"/><rect x="0" y="5.2" width="4" height="4" fill="#afb1b3"/><rect x="5.4" y="5.2" width="4" height="4" fill="#afb1b3"/></svg>
<svg style="left:13px;top:1168px;" width="12.6" height="12" viewBox="0 0 12.6 12"><path d="M2.4,0.5 H12 V8" fill="none" stroke="#afb1b3" stroke-width="1"/><path d="M0.5,9 V2.6 H9.8 V5.2" fill="none" stroke="#afb1b3" stroke-width="1"/><circle cx="7.4" cy="7.6" r="2.1" fill="none" stroke="#afb1b3" stroke-width="1"/><path d="M8.9,9.2 L11.6,11.8" stroke="#afb1b3" stroke-width="1.2"/></svg>
<svg style="left:1520.8px;top:68.2px;" width="13.6" height="10.529032258064515" viewBox="0 0 15.5 12"><path d="M0.2,11.8 C0,7.5 1.2,4 4,3 C6.5,2.2 9,2.6 10.6,4 C11.4,4.7 12,5 12.6,4.8 L14,6.4 C13,7.6 12,8.2 11.5,8.8 L11.4,11.8 H8.9 L8.7,10.7 C8.2,10.1 7.4,10.1 7,10.7 L6.8,11.8 H4.6 L4.4,10.7 C3.9,10.1 3.1,10.1 2.8,10.7 L2.6,11.8 Z" fill="#afb1b3"/><path d="M12.6,6 C14.6,4.8 15.1,2.6 14.1,1.4 C13.2,0.4 11.6,0.7 11.3,1.8" fill="none" stroke="#afb1b3" stroke-width="1.5" stroke-linecap="round"/></svg>
<svg style="left:1522.6px;top:1062.8px;" width="9.8" height="13" viewBox="0 0 9.8 13"><rect x="0.7" y="0.7" width="8.2" height="11.6" rx="1" fill="none" stroke="#afb1b3" stroke-width="1.4"/><rect x="0.7" y="9.6" width="8.2" height="2.4" fill="#afb1b3"/></svg>
<svg style="left:1470.6px;top:826.6px;" width="13.2" height="13.2" viewBox="0 0 13.2 13.2"></svg>
<svg style="left:1470.0px;top:826.0px;" width="14.4" height="14.4" viewBox="0 0 14.4 14.4"><path d="M5.38,3.26 L5.70,1.18 L8.70,1.18 L9.02,3.26 L9.70,3.66 L11.66,2.89 L13.16,5.49 L11.52,6.80 L11.52,7.60 L13.16,8.91 L11.66,11.51 L9.70,10.74 L9.02,11.14 L8.70,13.22 L5.70,13.22 L5.38,11.14 L4.70,10.74 L2.74,11.51 L1.24,8.91 L2.88,7.60 L2.88,6.80 L1.24,5.49 L2.74,2.89 L4.70,3.66 Z M9.43,7.20 A2.23,2.23 0 1 0 4.97,7.20 A2.23,2.23 0 1 0 9.43,7.20 Z" fill="#afb1b3" fill-rule="evenodd"/></svg>
<div style="left:1497px;top:832.2px;width:12px;height:1.6px;background:#afb1b3;"></div>
<svg style="left:1495.4px;top:855px;" width="14.4" height="14.4" viewBox="0 0 14.4 14.4"><rect x="0" y="0.6" width="12.6" height="1.5" fill="#afb1b3"/><path d="M0,6.2 H10.4 A2.6,2.6 0 0 1 10.4,11.4 H8" fill="none" stroke="#afb1b3" stroke-width="1.5"/><path d="M8.8,8.8 L5.6,11.4 L8.8,14 Z" fill="#afb1b3"/><rect x="0" y="10.6" width="1.6" height="1.5" fill="#afb1b3"/><rect x="3" y="10.6" width="1.6" height="1.5" fill="#afb1b3"/></svg>
<svg style="left:1495.8px;top:881.4px;" width="12.6" height="12" viewBox="0 0 12.6 12"><rect x="0" y="2.6" width="4.4" height="1.5" fill="#d0d2d4"/><rect x="0" y="6" width="4.4" height="1.5" fill="#d0d2d4"/><rect x="0" y="10" width="12.4" height="1.6" fill="#d0d2d4"/><path d="M9,0 V5" stroke="#d0d2d4" stroke-width="1.6"/><path d="M5.6,4.2 H12.4 L9,8.2 Z" fill="#d0d2d4"/></svg>
<svg style="left:81px;top:854.2px;" width="12.6" height="9.8" viewBox="0 0 12.6 9.8"><path d="M0.9,5.68 L4.54,8.60 L11.70,1.1" fill="none" stroke="#499c54" stroke-width="2.9"/></svg>
<svg style="left:36.6px;top:880.6px;" width="15" height="15" viewBox="0 0 15 15"><path d="M9.4,0 L14.8,5.4 L11.6,6.4 L10.6,11.2 L7.6,8.2 L0.1,14.9 L6.6,7.2 L3.6,4.2 L8.4,3.2 Z" fill="#afb1b3"/></svg>
<svg style="left:36.6px;top:908.2px;" width="17" height="15.2" viewBox="0 0 17 15.2"><path d="M0.2,5.8 C3,0 11.6,0 14.6,5.8 C11.6,11.6 3,11.6 0.2,5.8 Z" fill="#afb1b3"/><circle cx="7.4" cy="5.8" r="3.6" fill="#3c3f41"/><circle cx="7.4" cy="5.8" r="2.1" fill="#afb1b3"/><path d="M10.4,11.8 H16.4 L13.4,15 Z" fill="#afb1b3"/></svg>
<svg style="left:43.6px;top:1201.4px;" width="10.6" height="10.8" viewBox="0 0 10.6 10.8"><path d="M0.9,0 V10.6" stroke="#afb1b3" stroke-width="1.8"/><path d="M0.9,7 H6.8 V3.4" fill="none" stroke="#afb1b3" stroke-width="1.7"/><path d="M3.4,4 L6.8,0.2 L10.2,4 Z" fill="#afb1b3"/></svg>
<svg style="left:177px;top:1201px;" width="11.2" height="9.8" viewBox="0 0 11.2 9.8"><rect width="11.2" height="9.8" fill="#afb1b3"/><path d="M1.8,2.2 L4.4,4.6 L1.8,7" stroke="#3c3f41" stroke-width="1.1" fill="none"/><rect x="5.2" y="6.8" width="3.8" height="1.1" fill="#3c3f41"/></svg>
<svg style="left:257.6px;top:1200.8px;" width="14" height="12" viewBox="0 0 14 12"><path d="M1.8,4.8 L7,1.4" stroke="#afb1b3" stroke-width="2.8"/><path d="M5,3.2 L12.2,10.8" stroke="#afb1b3" stroke-width="2.2"/></svg>
<div style="left:323px;top:1203px;width:11px;height:1.7px;background:#afb1b3;"></div>
<div style="left:323px;top:1206.4px;width:7px;height:1.7px;background:#afb1b3;"></div>
<div style="left:323px;top:1209.8px;width:11px;height:1.7px;background:#afb1b3;"></div>
<div style="left:409px;top:1202.2px;width:2px;height:1.8px;background:#afb1b3;"></div>
<div style="left:412.4px;top:1202.2px;width:7px;height:1.8px;background:#afb1b3;"></div>
<div style="left:409px;top:1205.5px;width:2px;height:1.8px;background:#afb1b3;"></div>
<div style="left:412.4px;top:1205.5px;width:7px;height:1.8px;background:#afb1b3;"></div>
<div style="left:409px;top:1208.8px;width:2px;height:1.8px;background:#afb1b3;"></div>
<div style="left:412.4px;top:1208.8px;width:7px;height:1.8px;background:#afb1b3;"></div>
<svg style="left:1436.8px;top:1200.4px;" width="13.4" height="13.4" viewBox="0 0 13.4 13.4"><circle cx="6.7" cy="6.7" r="6.6" fill="#f2a633"/></svg>
<svg style="left:14px;top:1222px;" width="12" height="12" viewBox="0 0 12 12"><rect x="2.6" y="0.5" width="8.9" height="8.9" fill="none" stroke="#afb1b3" stroke-width="1"/><path d="M0.5,2.6 V11.5 H9.4" fill="none" stroke="#afb1b3" stroke-width="1"/></svg>
<svg style="left:1488.6px;top:1221px;" width="12.4" height="13" viewBox="0 0 12.4 13"><path d="M2,5.4 V3.4 A2.4,2.4 0 0 1 6.8,3.2" fill="none" stroke="#afb1b3" stroke-width="1.5"/><rect x="4.2" y="6" width="7.6" height="6.4" fill="#afb1b3"/></svg>
<svg style="left:1514px;top:1220.4px;" width="12.6" height="13.4" viewBox="0 0 12.6 13.4"><path d="M2.8,4.4 L3.6,0.6 H9 L9.8,4.4 Z" fill="#afb1b3"/><rect x="0.2" y="4.2" width="12.2" height="1.5" fill="#afb1b3"/><path d="M2.6,6.6 H10 V8.6 A3.7,3.7 0 0 1 2.6,8.6 Z" fill="#afb1b3"/><circle cx="4.9" cy="8" r="0.8" fill="#3c3f41"/><circle cx="7.7" cy="8" r="0.8" fill="#3c3f41"/><path d="M1.4,13.4 A5,3.4 0 0 1 11.2,13.4 Z" fill="#afb1b3"/></svg>
<span class="t" id="t102" style="font-size:10px;color:#2b2b2b;font-weight:bold;left:1440.8px;top:1202.94px;">2</span>
<svg style="left:34px;top:74.2px;" width="194.2" height="36.8" viewBox="0 0 194.2 36.8"><rect x="1.7" y="1.7" width="190.79999999999998" height="33.4" rx="2.8" ry="2.8" fill="none" stroke="#fd1b14" stroke-width="3.4"/></svg>
<svg style="left:36px;top:325px;" width="170.2" height="40" viewBox="0 0 170.2 40"><rect x="1.7" y="1.7" width="166.79999999999998" height="36.6" rx="2.8" ry="2.8" fill="none" stroke="#fd1b14" stroke-width="3.4"/></svg>
<svg style="left:429px;top:203px;" width="599" height="86" viewBox="0 0 599 86"><rect x="1.5" y="1.5" width="596.0" height="83.0" rx="2.8" ry="2.8" fill="none" stroke="#fd1b14" stroke-width="3.0"/></svg>
<svg style="left:210px;top:56px;" width="170" height="46" viewBox="0 0 170 46"><path d="M372.8,61.4 L231.5,84 L232.3,80.6 L218.4,92 L236,96.6 L234.6,93.6 L372.8,62.6 Z" fill="#fd1b14" transform="translate(-210,-56)"/></svg>
</div></body></html>
